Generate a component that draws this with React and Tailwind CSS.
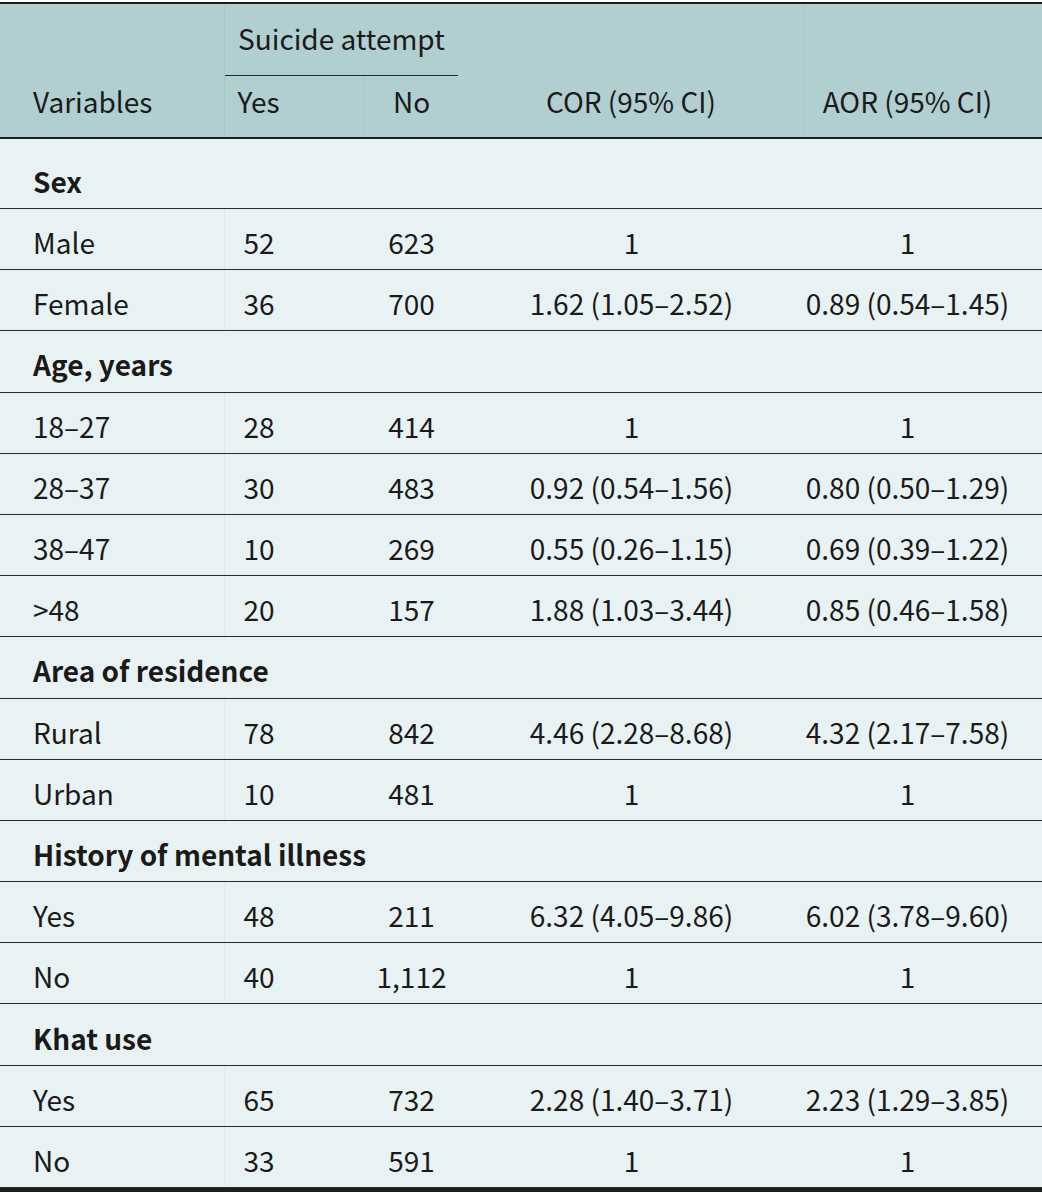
import React from 'react';

const groups = [
  {
    title: 'Sex',
    rows: [
      ['Male', '52', '623', '1', '1'],
      ['Female', '36', '700', '1.62 (1.05–2.52)', '0.89 (0.54–1.45)'],
    ],
  },
  {
    title: 'Age, years',
    rows: [
      ['18–27', '28', '414', '1', '1'],
      ['28–37', '30', '483', '0.92 (0.54–1.56)', '0.80 (0.50–1.29)'],
      ['38–47', '10', '269', '0.55 (0.26–1.15)', '0.69 (0.39–1.22)'],
      ['>48', '20', '157', '1.88 (1.03–3.44)', '0.85 (0.46–1.58)'],
    ],
  },
  {
    title: 'Area of residence',
    rows: [
      ['Rural', '78', '842', '4.46 (2.28–8.68)', '4.32 (2.17–7.58)'],
      ['Urban', '10', '481', '1', '1'],
    ],
  },
  {
    title: 'History of mental illness',
    rows: [
      ['Yes', '48', '211', '6.32 (4.05–9.86)', '6.02 (3.78–9.60)'],
      ['No', '40', '1,112', '1', '1'],
    ],
  },
  {
    title: 'Khat use',
    rows: [
      ['Yes', '65', '732', '2.28 (1.40–3.71)', '2.23 (1.29–3.85)'],
      ['No', '33', '591', '1', '1'],
    ],
  },
];

const COLS = 'grid grid-cols-[225px_140px_93px_347px_237px]';

const GroupRow = ({ title, first }) => (
  <div className={`flex items-center border-b border-[#2b2b2b] pl-[33px] font-bold whitespace-nowrap ${first ? 'h-[70px] pt-[14px]' : 'h-[61.2px] pt-[6px]'}`}>
    {title}
  </div>
);

const DataRow = ({ cells }) => (
  <div className={`${COLS} h-[61.2px] border-b border-[#2b2b2b]`}>
    <div className="flex items-center pl-[33px] pt-[6px] border-r border-[#e1eaea]">{cells[0]}</div>
    <div className="flex items-center justify-center pr-[72px] pt-[6px]">{cells[1]}</div>
    <div className="flex items-center justify-center pt-[6px]">{cells[2]}</div>
    <div className="flex items-center justify-center pt-[6px]">{cells[3]}</div>
    <div className="flex items-center justify-center pr-[32px] pt-[6px]">{cells[4]}</div>
  </div>
);

export default function App() {
  return (
    <div
      className="w-[1042px] h-[1193px] overflow-hidden bg-white text-[#1a1a1a] text-[28px] leading-none"
      style={{ fontFamily: '"Noto Sans CJK SC", "Noto Sans", sans-serif' }}
    >
      <div className="mt-[2px] border-t-2 border-[#1e1e1e]">
        {/* header */}
        <div className={`${COLS} h-[135px] bg-[#b1cfd1] border-b-2 border-[#1e1e1e]`}>
          <div className="flex items-end pl-[33px] pb-[22px] border-r border-[#a9c7c9]">Variables</div>
          <div className="col-span-2 flex flex-col">
            <div className="h-[72px] border-b border-[#2b2b2b] flex items-center pl-[13px] pb-[4px]">
              Suicide attempt
            </div>
            <div className="flex-1 grid grid-cols-[140px_93px]">
              <div className="flex items-end justify-center pr-[72px] pb-[22px] border-r border-[#a9c7c9]">Yes</div>
              <div className="flex items-end justify-center pb-[22px]">No</div>
            </div>
          </div>
          <div className="flex items-end justify-center pb-[22px] border-r border-[#a9c7c9]">COR (95% CI)</div>
          <div className="flex items-end justify-center pb-[22px] pr-[32px]">AOR (95% CI)</div>
        </div>

        {/* body */}
        <div className="bg-[#e9f2f2]">
          {groups.map((g, gi) => (
            <React.Fragment key={g.title}>
              <GroupRow title={g.title} first={gi === 0} />
              {g.rows.map((r, ri) => (
                <DataRow key={ri} cells={r} />
              ))}
            </React.Fragment>
          ))}
        </div>
        <div className="h-[4px] bg-[#1e1e1e]" />
      </div>
    </div>
  );
}
